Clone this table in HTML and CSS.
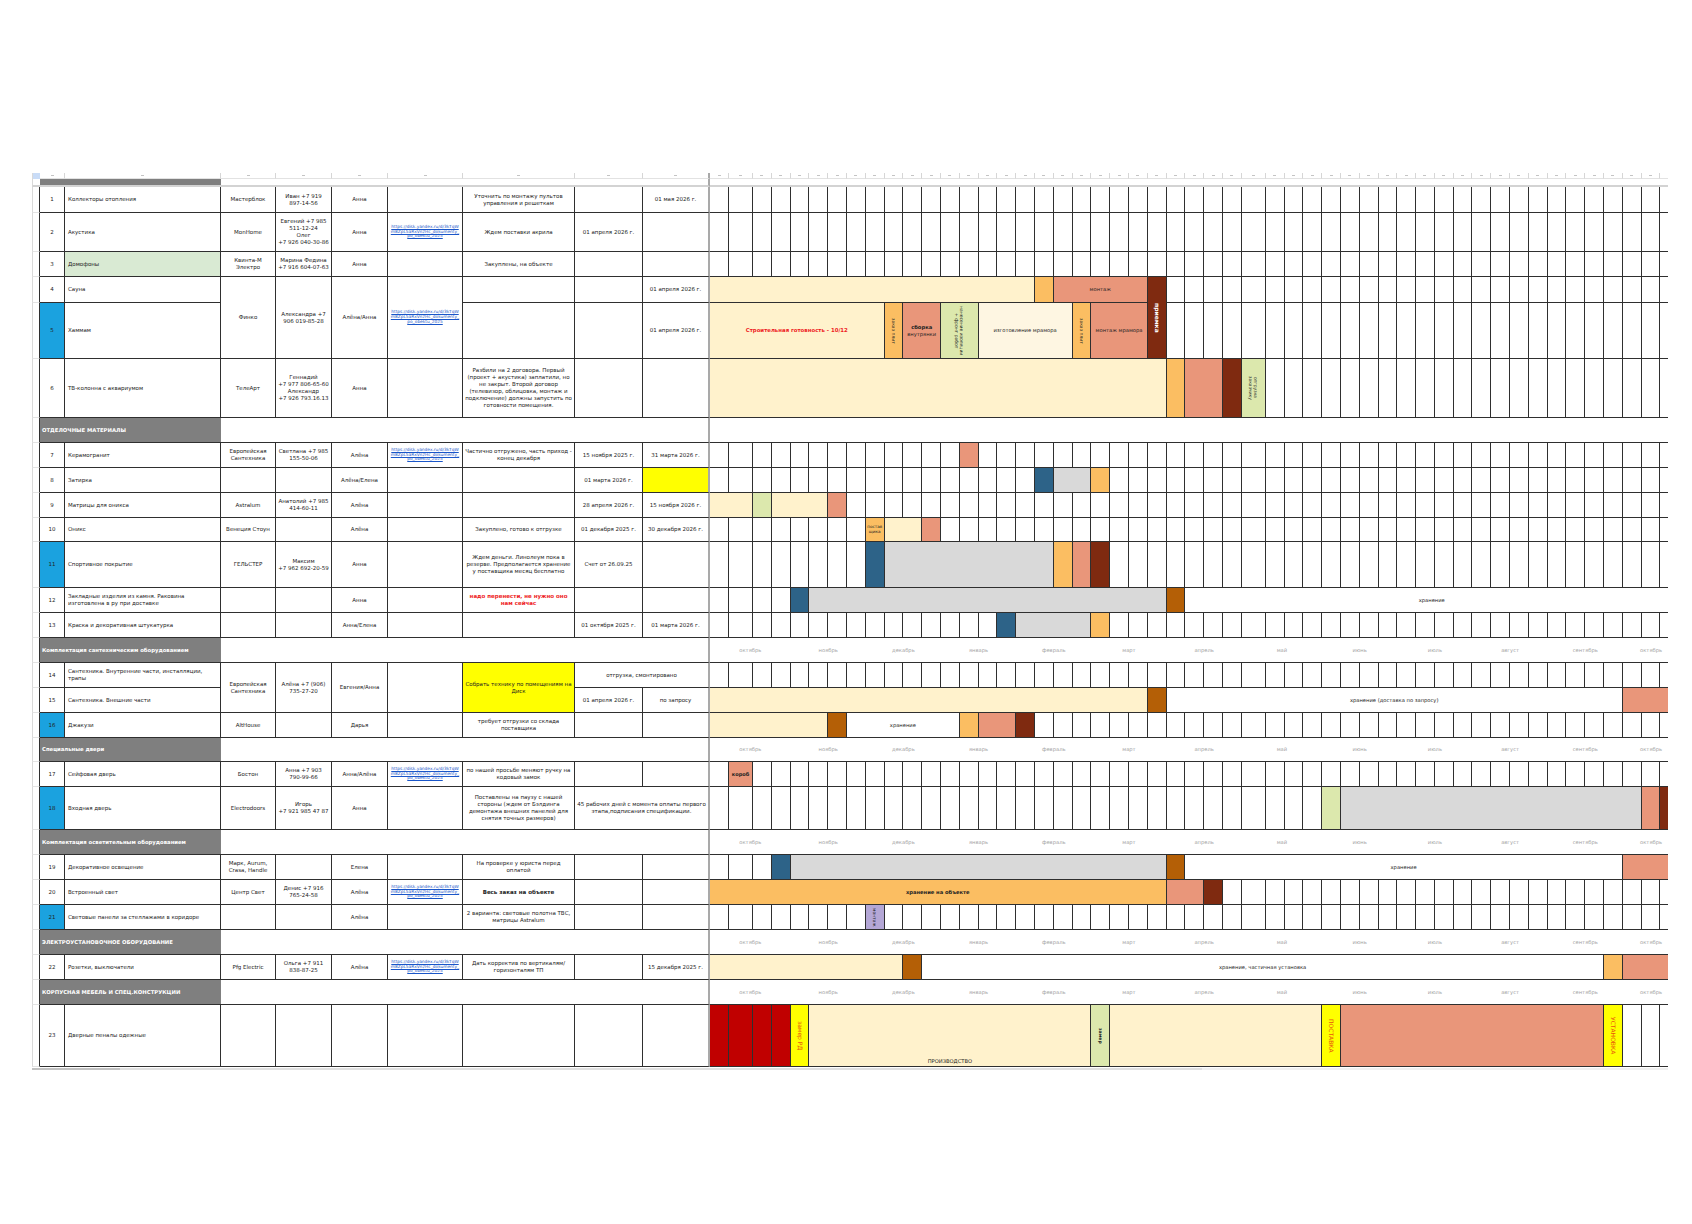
FILE: index.html
```html
<!DOCTYPE html>
<html lang="ru">
<head>
<meta charset="utf-8">
<title>График поставок и монтажа</title>
<link rel="stylesheet" href="styles.css">
</head>
<body>
<div class="page">
  <div class="viewport">
    <div class="sheet" id="sheet"></div>
  </div>
  <div class="hscroll"><span class="thumb"></span></div>
</div>
<script src="app.js"></script>
</body>
</html>
```

FILE: styles.css
```css
* { box-sizing: border-box; margin: 0; padding: 0; }
html, body { background: #fff; }
body { font-family: "DejaVu Sans", "Liberation Sans", sans-serif; color: #222; }

.page { width: 1692px; height: 1224px; overflow: hidden; padding: 173px 0 0 32px; }
.viewport { width: 1636px; overflow: hidden; }

.sheet {
  display: grid;
  width: max-content;
  grid-template-columns:
    8px 25px 156px 55px 56px 56px 75px 112px 68px 67px
    19px 24px repeat(26, 18.8px) 24px repeat(22, 18.8px);
  grid-template-rows:
    6px 8px
    26px 39px 25px 26px 56px 59px
    25px
    25px 25px 25px 24px 46px 25px 25px
    25px
    25px 25px 25px
    24px
    25px 43px
    25px
    25px 25px 25px
    25px
    25px
    25px
    62px;
}

.c {
  border-right: 1px solid #2f2f2f;
  border-bottom: 1px solid #2f2f2f;
  font-size: 5.5px;
  line-height: 1.25;
  display: flex;
  align-items: center;
  justify-content: center;
  text-align: center;
  overflow: hidden;
  padding: 0 2px;
  min-width: 0;
}

/* gutter */
.gut { border-left: 1px solid #d9d9d9; border-bottom: 1px solid #e3e3e3; padding: 0; }
.gutA { border-left: 1px solid #d9d9d9; border-right: none; border-bottom: none; background: #c9dcf7; }
.gutB { border-left: 1px solid #d9d9d9; border-right: none; border-bottom: 2px solid #d3d3d3; }

/* header strips */
.hA { border-right: 1px solid #d6d6d6; border-bottom: 1px solid #e2e2e2; padding: 0; }
.hA::after { content: ""; width: 3px; height: 1px; background: #c4c4c4; }
.hB { border-right: none; border-bottom: 2px solid #d3d3d3; padding: 0; }
.hB.grey { background: #7f7f7f; }

/* info cells */
.num { padding: 0; }
.num.blu { background: #1ba2df; }
.name { justify-content: flex-start; text-align: left; padding-left: 3px; }
.name.lg { background: #d9ead3; }
.con { padding: 0 1px; }
.lnk { color: #1a56c9; text-decoration: underline; font-size: 4.3px; line-height: 1.15; word-break: break-all; }
.ye { background: #ffff00; }
.redb { color: #ee1c24; font-weight: bold; }
.b { font-weight: bold; }

/* sections */
.sec { background: #7f7f7f; color: #fff; font-weight: bold; font-size: 5.3px; justify-content: flex-start; padding-left: 2px; border-right: none; }
.secw { border-right: none; }
.mon { border-right: none; color: #a2a2a2; font-size: 5.2px; }

/* gantt */
.g { padding: 0; }
.bar { padding: 0 1px; }
.bt { font-size: 5.2px; line-height: 1.2; }
.vt { writing-mode: vertical-rl; font-size: 4.5px; line-height: 1.15; white-space: nowrap; }
.cr { background: #fff2cc; }
.lc { background: #fef6e2; }
.or { background: #fbbe62; }
.sa { background: #e9967a; }
.br { background: #7f2a10; }
.bm { background: #b45f06; }
.tl { background: #2d6388; }
.gy { background: #d9d9d9; }
.gr { background: #dce8ad; }
.lv { background: #b4a7d6; }
.rd { background: #c00000; }
.wh { background: #fff; }
.bar.wb { color: #fff; }
.bar.wb .vt { font-size: 6px; font-weight: bold; }
.bar.redb .bt { color: #ee1c24; font-weight: bold; font-size: 5.4px; }
.bar.b .bt, .bar.b .vt { font-weight: bold; }
.bar.tiny .bt { font-size: 4.2px; word-break: break-all; line-height: 1.1; }
.bar.b5 .bt { font-size: 5px; font-weight: bold; }
.bar.ort .vt { color: #e8540c; font-size: 6px; }
.bar.bot { align-items: flex-end; padding-bottom: 2px; }

/* frozen pane divider */
.fz { border-right: 2px solid #a9a9a9; }

/* bottom scrollbar */
.hscroll { width: 1636px; height: 2px; background: #f0f0f0; margin-top: 1px; display: flex; }
.thumb { width: 1170px; height: 2px; background: linear-gradient(to right, #c2c2c2 0, #c2c2c2 88px, #e0e0e0 88px); }
```

FILE: app.js
```js
(function () {
  var sheet = document.getElementById('sheet');
  var G0 = 11;
  var N = 51;
  var MONTHS = ['октябрь', 'ноябрь', 'декабрь', 'январь', 'февраль', 'март', 'апрель', 'май', 'июнь', 'июль', 'август', 'сентябрь', 'октябрь'];
  var L = '<a class="lnk">https://disk.yandex.ru/d/3kTqWm8ZpL5aRxVn2Hc_dokumenty_po_obektu_2025</a>';

  function cell(row, col, rs, cs, cls, html) {
    var d = document.createElement('div');
    d.className = 'c ' + (cls || '');
    d.style.gridRow = row + ' / span ' + rs;
    d.style.gridColumn = col + ' / span ' + cs;
    if (html) d.innerHTML = html;
    sheet.appendChild(d);
    return d;
  }

  var R = [
    {n:'1',name:'Коллекторы отопления',sup:'Мастерблок',con:'Иван +7 919<br>897-14-56',resp:'Анна',com:'Уточнить по монтажу пультов управления и решеткам',d2:'01 мая 2026 г.'},
    {n:'2',name:'Акустика',sup:'MonHome',con:'Евгений +7 985<br>511-12-24<br>Олег<br>+7 926 040-30-86',resp:'Анна',link:L,com:'Ждем поставки акрила',d1:'01 апреля 2026 г.'},
    {n:'3',name:'Домофоны',namec:'lg',sup:'Квинта-М Электро',con:'Марина Федина<br>+7 916 604-07-63',resp:'Анна',com:'Закуплены, на объекте'},
    {n:'4',name:'Сауна',sup:{t:'Финко',rs:2},con:{t:'Александра +7<br>906 019-85-28',rs:2},resp:{t:'Алёна/Анна',rs:2},link:{t:L,rs:2},d2:'01 апреля 2026 г.',
      bars:[[0,17,'cr'],[17,1,'or'],[18,5,'sa','монтаж'],[23,1,'br','приемка',{rs:2,v:1,cls:'wb'}]]},
    {n:'5',nc:'blu',name:'Хаммам',sup:false,con:false,resp:false,link:false,d2:'01 апреля 2026 г.',cover:[23],
      bars:[[0,9,'cr','Строительная готовность - 10/12',{cls:'redb'}],[9,1,'or','заказ плит',{v:1}],[10,2,'sa','<b>сборка</b> внутрянки'],[12,2,'gr','нанесение изоляции<br>+ фронт работ',{v:1}],[14,5,'lc','изготовление мрамора'],[19,1,'or','заказ плит',{v:1}],[20,3,'sa','монтаж мрамора']]},
    {n:'6',name:'ТВ-колонна с аквариумом',sup:'ТелеАрт',con:'Геннадий<br>+7 977 806-65-60<br>Александр<br>+7 926 793.16.13',resp:'Анна',com:'Разбили на 2 договора. Первый (проект + акустика) заплатили, но не закрыт. Второй договор (телевизор, облицовка, монтаж и подключение) должны запустить по готовности помещения.',
      bars:[[0,24,'cr'],[24,1,'or'],[25,2,'sa'],[27,1,'br'],[28,1,'gr','отгрузка<br>заказчику',{v:1}]]},
    {s:'ОТДЕЛОЧНЫЕ МАТЕРИАЛЫ'},
    {n:'7',name:'Керамогранит',sup:'Европейская Сантехника',con:'Светлана +7 985<br>155-50-06',resp:'Алёна',link:L,com:'Частично отгружено, часть приход - конец декабря',d1:'15 ноября 2025 г.',d2:'31 марта 2026 г.',bars:[[13,1,'sa']]},
    {n:'8',name:'Затирка',resp:'Алёна/Елена',d1:'01 марта 2026 г.',d2c:'ye',bars:[[17,1,'tl'],[18,2,'gy'],[20,1,'or']]},
    {n:'9',name:'Матрицы для оникса',sup:'Astralum',con:'Анатолий +7 985<br>414-60-11',resp:'Алёна',d1:'28 апреля 2026 г.',d2:'15 ноября 2026 г.',bars:[[0,2,'cr'],[2,1,'gr'],[3,3,'cr'],[6,1,'sa']]},
    {n:'10',name:'Оникс',sup:'Венеция Стоун',resp:'Алёна',com:'Закуплено, готово к отгрузке',d1:'01 декабря 2025 г.',d2:'30 декабря 2026 г.',bars:[[8,1,'or','поставщика',{cls:'tiny'}],[9,2,'cr'],[11,1,'sa']]},
    {n:'11',nc:'blu',name:'Спортивное покрытие',sup:'ГЕЛЬСТЕР',con:'Максим<br>+7 962 692-20-59',resp:'Анна',com:'Ждем деньги. Линолеум пока в резерве. Предполагается хранение у поставщика месяц бесплатно',d1:'Счет от 26.09.25',bars:[[8,1,'tl'],[9,9,'gy'],[18,1,'or'],[19,1,'sa'],[20,1,'br']]},
    {n:'12',name:'Закладные изделия из камня. Раковина изготовлена в ру при доставке',resp:'Анна',com:{t:'надо перенести, не нужно оно нам сейчас',c:'redb'},bars:[[4,1,'tl'],[5,19,'gy'],[24,1,'bm'],[25,26,'wh','хранение']]},
    {n:'13',name:'Краска и декоративная штукатурка',resp:'Анна/Елена',d1:'01 октября 2025 г.',d2:'01 марта 2026 г.',bars:[[15,1,'tl'],[16,4,'gy'],[20,1,'or']]},
    {s:'Комплектация сантехническим оборудованием',m:1},
    {n:'14',name:'Сантехника. Внутренние части, инсталляции, трапы',sup:{t:'Европейская Сантехника',rs:2},con:{t:'Алёна +7 (906)<br>735-27-20',rs:2},resp:{t:'Евгения/Анна',rs:2},link:{t:'',rs:2},com:{t:'Собрать технику по помещениям на Диск',rs:2,c:'ye'},dd:'отгрузка, смонтировано'},
    {n:'15',name:'Сантехника. Внешние части',sup:false,con:false,resp:false,link:false,com:false,d1:'01 апреля 2026 г.',d2:'по запросу',bars:[[0,23,'cr'],[23,1,'bm'],[24,24,'wh','хранение (доставка по запросу)'],[48,3,'sa']]},
    {n:'16',nc:'blu',name:'Джакузи',sup:'AltHouse',resp:'Дарья',com:'требует отгрузки со склада поставщика',bars:[[0,6,'cr'],[6,1,'bm'],[7,6,'wh','хранение'],[13,1,'or'],[14,2,'sa'],[16,1,'br']]},
    {s:'Специальные двери',m:1},
    {n:'17',name:'Сейфовая дверь',sup:'Бостон',con:'Анна +7 903<br>790-99-66',resp:'Анна/Алёна',link:L,com:'по нашей просьбе меняют ручку на кодовый замок',bars:[[1,1,'sa','короб',{cls:'b5'}]]},
    {n:'18',nc:'blu',name:'Входная дверь',sup:'Electrodoors',con:'Игорь<br>+7 921 985 47 87',resp:'Анна',com:'Поставлены на паузу с нашей стороны (ждем от Бэлдинга демонтажа внешних панелей для снятия точных размеров)',dd:'45 рабочих дней с момента оплаты первого этапа,подписания спецификации.',bars:[[32,1,'gr'],[33,16,'gy'],[49,1,'sa'],[50,1,'br']]},
    {s:'Комплектация осветительным оборудованием',m:1},
    {n:'19',name:'Декоративное освещение',sup:'Марк, Aurum, Crasa, Handle',resp:'Елена',com:'На проверке у юриста перед оплатой',bars:[[3,1,'tl'],[4,20,'gy'],[24,1,'bm'],[25,23,'wh','хранение'],[48,3,'sa']]},
    {n:'20',name:'Встроенный свет',sup:'Центр Свет',con:'Денис +7 916<br>765-24-58',resp:'Алёна',link:L,com:{t:'Весь заказ на объекте',c:'b'},bars:[[0,24,'or','хранение на объекте',{cls:'b'}],[24,2,'sa'],[26,1,'br']]},
    {n:'21',nc:'blu',name:'Световые панели за стеллажами в коридоре',resp:'Алёна',com:'2 варианта: световые полотна ТВС, матрицы Astralum',bars:[[8,1,'lv','монтаж',{v:1}]]},
    {s:'ЭЛЕКТРОУСТАНОВОЧНОЕ ОБОРУДОВАНИЕ',m:1},
    {n:'22',name:'Розетки, выключатели',sup:'Pfg Electric',con:'Ольга +7 911<br>838-87-25',resp:'Алёна',link:L,com:'Дать корректив по вертикалям/горизонталям ТП',d2:'15 декабря 2025 г.',bars:[[0,10,'cr'],[10,1,'bm'],[11,36,'wh','хранение, частичная установка'],[47,1,'or'],[48,3,'sa']]},
    {s:'КОРПУСНАЯ МЕБЕЛЬ И СПЕЦ.КОНСТРУКЦИИ',m:1},
    {n:'23',name:'Дверные пеналы одежные',bars:[[0,1,'rd'],[1,1,'rd'],[2,1,'rd'],[3,1,'rd'],[4,1,'ye','замер РД',{v:1,cls:'ort'}],[5,15,'cr','ПРОИЗВОДСТВО',{cls:'bot'}],[20,1,'gr','замер',{v:1,cls:'b'}],[21,11,'cr'],[32,1,'ye','ПОСТАВКА',{v:1,cls:'ort'}],[33,14,'sa'],[47,1,'ye','УСТАНОВКА',{v:1,cls:'ort'}]]}
  ];

  /* header strips */
  cell(1, 1, 1, 1, 'gutA', '');
  for (var c = 2; c <= G0 + N - 1; c++) cell(1, c, 1, 1, 'hA' + (c === 10 ? ' fz' : ''), '');
  cell(2, 1, 1, 1, 'gutB', '');
  cell(2, 2, 1, 2, 'hB grey', '');
  cell(2, 4, 1, 7, 'hB fz', '');
  cell(2, G0, 1, N, 'hB', '');

  var FIELDS = ['sup', 'con', 'resp', 'link', 'com'];

  function info(r, row) {
    cell(row, 1, 1, 1, 'gut', '');
    cell(row, 2, 1, 1, 'num ' + (r.nc || ''), r.n);
    cell(row, 3, 1, 1, 'name ' + (r.namec || ''), r.name);
    FIELDS.forEach(function (f, i) {
      var v = r[f];
      if (v === false) return;
      var o = (v && typeof v === 'object') ? v : { t: v || '' };
      cell(row, 4 + i, o.rs || 1, 1, f + ' ' + (o.c || ''), o.t || '');
    });
    if (r.dd !== undefined) {
      if (r.dd !== false) cell(row, 9, 1, 2, 'dd fz', r.dd);
    } else {
      cell(row, 9, 1, 1, 'd1', r.d1 || '');
      cell(row, 10, 1, 1, 'd2 fz ' + (r.d2c || ''), r.d2 || '');
    }
  }

  function gantt(r, row) {
    var used = [];
    for (var k = 0; k < N; k++) used.push(false);
    (r.cover || []).forEach(function (k) { used[k] = true; });
    (r.bars || []).forEach(function (b) {
      var s = b[0], sp = b[1], cls = b[2], t = b[3], o = b[4] || {};
      for (var k = s; k < s + sp; k++) used[k] = true;
      var html = t ? '<span class="' + (o.v ? 'vt' : 'bt') + '">' + t + '</span>' : '';
      cell(row, G0 + s, o.rs || 1, sp, 'bar ' + cls + (o.cls ? ' ' + o.cls : ''), html);
    });
    for (var j = 0; j < N; j++) if (!used[j]) cell(row, G0 + j, 1, 1, 'g', '');
  }

  function section(r, row) {
    cell(row, 1, 1, 1, 'gut', '');
    cell(row, 2, 1, 2, 'sec', r.s);
    cell(row, 4, 1, 7, 'secw fz', '');
    if (r.m) {
      MONTHS.forEach(function (m, i) {
        cell(row, G0 + i * 4, 1, i < 12 ? 4 : 3, 'mon', m);
      });
    } else {
      cell(row, G0, 1, N, 'mon', '');
    }
  }

  R.forEach(function (r, i) {
    var row = 3 + i;
    if (r.s) { section(r, row); }
    else { info(r, row); gantt(r, row); }
  });
})();
```
